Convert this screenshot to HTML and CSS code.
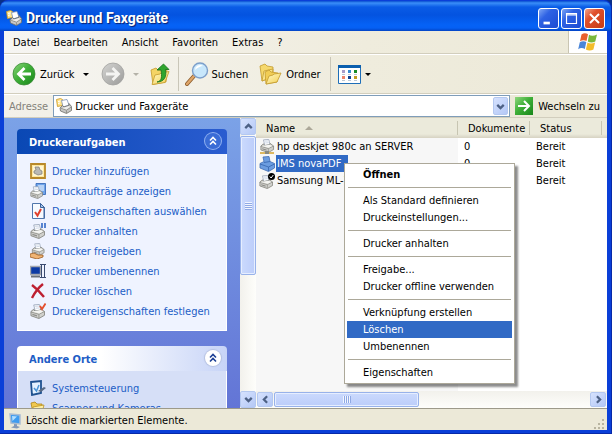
FILE: index.html
```html
<!DOCTYPE html>
<html lang="de">
<head>
  <meta charset="utf-8">
  <title>Drucker und Faxgeräte</title>
  <link rel="stylesheet" href="styles.css">
</head>
<body>
  <svg class="sprites" aria-hidden="true">
    <symbol id="printer" viewBox="0 0 16 16">
      <path d="M4 1l6-.5 1.500 6-6 1z" fill="#fff" stroke="#8c9ab0" stroke-width=".8"/>
      <path d="M5.500 2.500l4-.3M6 4.500l4-.3" stroke="#b8c6dc" stroke-width=".8"/>
      <path d="M1 8l3-2.500 1 2 6-1 .5-1.500 4 3v4l-6 3.500-8.500-3z" fill="#d0d0cc" stroke="#77776f" stroke-width=".8"/>
      <path d="M1 8.500l8.500 2.500 6-3M9.500 11v4" fill="none" stroke="#8b8b84" stroke-width=".8"/>
      <path d="M2.500 10.500l5 1.600v1.200l-5-1.500z" fill="#8c8c88"/>
      <path d="M2 8l8 2 4-2-3-1.500-6 1z" fill="#f5f5f2"/>
    </symbol>
    <symbol id="printers" viewBox="0 0 16 16">
      <path d="M.500 1.500l4-1 2 1v6l-5 1z" fill="#ffe48a" stroke="#c99722" stroke-width=".8"/>
      <path d="M2 3.500l2.500-.5M2 5.500l2-.5" stroke="#fff"/>
      <path d="M5.500 2.500l5.500-1 2 5.500-6 2z" fill="#fff" stroke="#7c90b4" stroke-width=".8"/>
      <path d="M4 10l2.500-2.500L8 9l5-1.500V5.500l2.500 3v4l-5 3L4.500 13z" fill="#c6c6c4" stroke="#6e6e68" stroke-width=".8"/>
      <path d="M4.500 10l6 2.200 4.500-3M10.500 12.500v2.500" fill="none" stroke="#888880" stroke-width=".8"/>
      <path d="M6 10l4.500 1.500L14 9l-1-1-5 1.500z" fill="#efefed"/>
    </symbol>
    <symbol id="chevrons" viewBox="0 0 16 16">
      <path d="M5 7.500l3-3 3 3M5 11.500l3-3 3 3" fill="none" stroke="currentColor" stroke-width="1.600"/>
    </symbol>
    <symbol id="angle" viewBox="0 0 16 16">
      <path d="M4 6l4 4 4-4" fill="none" stroke="#4d6185" stroke-width="2.800"/>
    </symbol>
    <symbol id="folder" viewBox="0 0 16 16">
      <path d="M1 3l4-1 2 2h5v9H3z" fill="#f0c850" stroke="#ad8416" stroke-width=".8"/>
      <path d="M3 7l11-2-2 8-9 1z" fill="#fff0a4" stroke="#ba9224" stroke-width=".8"/>
    </symbol>
    <linearGradient id="greenFill" x1="0" y1="0" x2="1" y2="1">
      <stop offset="0" stop-color="#8ed67d"/>
      <stop offset=".45" stop-color="#3fb038"/>
      <stop offset="1" stop-color="#17861a"/>
    </linearGradient>
    <linearGradient id="grayFill" x1="0" y1="0" x2="1" y2="1">
      <stop offset="0" stop-color="#d4d4d2"/>
      <stop offset="1" stop-color="#9b9b99"/>
    </linearGradient>
    <linearGradient id="folderFill" x1="0" y1="0" x2="1" y2="1">
      <stop offset="0" stop-color="#fff8c4"/>
      <stop offset="1" stop-color="#f3cf52"/>
    </linearGradient>
  </svg>

  <div class="window">
    <header class="titlebar">
      <svg class="icon"><use href="#printers"/></svg>
      <h1>Drucker und Faxgeräte</h1>
      <div class="controls">
        <button aria-label="Minimieren"><svg viewBox="0 0 21 21"><path d="M5 14h7v3H5z" fill="#fff"/></svg></button>
        <button aria-label="Maximieren"><svg viewBox="0 0 21 21"><path d="M5 5h11v11H5zM5 6.500h11" fill="none" stroke="#fff" stroke-width="1.300"/></svg></button>
        <button class="close" aria-label="Schließen"><svg viewBox="0 0 21 21"><path d="M5.500 5.500l10 10M15.500 5.500l-10 10" stroke="#fff" stroke-width="2.200"/></svg></button>
      </div>
    </header>

    <nav class="menubar">
      <button>Datei</button>
      <button>Bearbeiten</button>
      <button>Ansicht</button>
      <button>Favoriten</button>
      <button>Extras</button>
      <button>?</button>
      <div class="flag">
        <svg viewBox="0 0 20 18">
          <path d="M3.500 1.500C5.500 0 8 0 10 1.200L8.500 8C6.500 7 4 7 2 8.300z" fill="#e8602c"/>
          <path d="M11 1.800c2 1.200 5 1.200 8-.3L17.300 8.500c-2.600 1.200-5.300 1.200-7.500 0z" fill="#7ab83a"/>
          <path d="M1.800 9.300C4 8 6.300 8 8.300 9L6.800 16c-2-1.200-4.600-1.200-6.600.2z" fill="#4a86d8"/>
          <path d="M9.500 9.600c2.200 1.200 5 1.200 7.600-.2l-1.700 7c-2.500 1.300-5.200 1.300-7.500 0z" fill="#f3bd2c"/>
        </svg>
      </div>
    </nav>

    <div class="toolbar">
      <button class="back">
        <svg class="round" viewBox="0 0 24 24">
          <circle cx="12" cy="12" r="11" fill="url(#greenFill)" stroke="#3a8c36" stroke-width=".8"/>
          <path d="M19 12H7M12.500 6l-6 6 6 6" fill="none" stroke="#fff" stroke-width="2.800"/>
        </svg>
        Zurück
        <i class="arrow"></i>
      </button>
      <button class="forward" aria-label="Vorwärts">
        <svg class="round" viewBox="0 0 24 24">
          <circle cx="12" cy="12" r="11" fill="url(#grayFill)" stroke="#a2a2a0" stroke-width=".8"/>
          <path d="M5 12h12M11.500 6l6 6-6 6" fill="none" stroke="#f4f4f2" stroke-width="2.800"/>
        </svg>
        <i class="arrow pale"></i>
      </button>
      <button class="up" aria-label="Aufwärts">
        <svg class="round" viewBox="0 0 24 24">
          <path d="M2 8l5-2 2 2 9-1-1 13-13 2.500z" fill="#f4d465" stroke="#c49b2c" stroke-width=".8"/>
          <path d="M3 22.500L6 13l5-1 1-1 8-1.500-4 11z" fill="url(#folderFill)" stroke="#c49b2c" stroke-width=".8"/>
          <path d="M8 20c5-1 5-5 4-12H8l6.500-6L20 7.500h-3.500C18 15 15 20 8 20z" fill="#2fa52d" stroke="#13701a" stroke-width=".8"/>
        </svg>
      </button>
      <button class="search">
        <svg class="round" viewBox="0 0 24 24">
          <path d="M9 14l-7 8" stroke="#8a5a2a" stroke-width="4" stroke-linecap="round"/>
          <path d="M9 14l-7 8" stroke="#dfa568" stroke-width="2.500" stroke-linecap="round"/>
          <circle cx="15" cy="8.500" r="7.500" fill="#c8e7fb" stroke="#7d9fca" stroke-width="1.400"/>
          <path d="M10 8a5 5 0 0 1 8-4c-2 0-6 2-8 4z" fill="#fff"/>
        </svg>
        Suchen
      </button>
      <button class="folders">
        <svg class="round" viewBox="0 0 24 24">
          <path d="M2 4l5-2 2 2 6 1v10L4 19z" fill="#f5d86c" stroke="#c39a2d" stroke-width=".8"/>
          <path d="M4 19l2-10 9-2-1 8z" fill="url(#folderFill)" stroke="#c39a2d" stroke-width=".8"/>
          <path d="M7 10l4-2 2 2 7 1-1 9-11 2z" fill="#f1cd55" stroke="#c39a2d" stroke-width=".8"/>
          <path d="M8 22l3-8 4-1 1-1 7-1-4 9z" fill="url(#folderFill)" stroke="#c39a2d" stroke-width=".8"/>
        </svg>
        Ordner
      </button>
      <button class="views" aria-label="Ansichten">
        <svg viewBox="0 0 23 19">
          <path d="M.5.500h22v18H.5z" fill="#fff" stroke="#1f6fb8"/>
          <path d="M0 0h23v3H0z" fill="#0c5fae"/>
          <path d="M4 5h3v3H4z" fill="#a99cc8"/>
          <path d="M10 5h3v3h-3z" fill="#3a8ad0"/>
          <path d="M16 5h3v3h-3z" fill="#188c28"/>
          <path d="M4 11h3v3H4z" fill="#ee8468"/>
          <path d="M10 11h3v3h-3z" fill="#12408e"/>
          <path d="M16 11h3v3h-3z" fill="#c09a20"/>
          <path d="M4 9.500h3m3 0h3m3 0h3M4 15.500h3m3 0h3m3 0h3" stroke="#bcc8d4"/>
        </svg>
        <i class="arrow"></i>
      </button>
    </div>

    <form class="address">
      <label for="path">Adresse</label>
      <div class="combo">
        <svg class="icon"><use href="#printers"/></svg>
        <input id="path" type="text" value="Drucker und Faxgeräte">
        <button type="button" class="scroll-btn" aria-label="Verlauf"><svg><use href="#angle"/></svg></button>
      </div>
      <button type="button" class="go">
        <svg viewBox="0 0 18 18">
          <path d="M0 0h18v18H0z" fill="url(#greenFill)"/>
          <path d="M3 9h10M9 4l5 5-5 5" fill="none" stroke="#fff" stroke-width="2"/>
        </svg>
        Wechseln zu
      </button>
    </form>

    <main class="content">
      <aside class="sidebar">
        <section class="panel primary">
          <h2>Druckeraufgaben
            <button aria-label="Einklappen"><svg><use href="#chevrons"/></svg></button>
          </h2>
          <ul>
            <li><a href="#"><svg viewBox="0 0 16 16"><path d="M1 1h14v14H1z" fill="#ffe9a0" stroke="#b8892a" stroke-width="1.800"/><path d="M3 3h10v10H3z" fill="#fff6d4"/><path d="M5 4h4l1 3 2 1v3l-4 1-4-2V8l2-1z" fill="#b9b9b5" stroke="#7b7b76" stroke-width=".7"/></svg>Drucker hinzufügen</a></li>
            <li><a href="#"><svg viewBox="0 0 16 16"><path d="M6 .5h9.500v11H6z" fill="#6fa4ea" stroke="#2d62b4" stroke-width=".8"/><path d="M8 3h6M8 5h6M8 7h6" stroke="#fff"/><use href="#printer" y="3" width="13" height="13"/></svg>Druckaufträge anzeigen</a></li>
            <li><a href="#"><svg viewBox="0 0 16 16"><path d="M2.500.500h8l4 4v11h-12z" fill="#f6faff" stroke="#5076ac"/><path d="M10.500.500v4h4zM14 5v10" fill="#aac4ea" stroke="#3a639c"/><path d="M5 9l2.500 3.500L11 6" fill="none" stroke="#e0402c" stroke-width="2"/></svg>Druckeigenschaften auswählen</a></li>
            <li><a href="#"><svg viewBox="0 0 16 16"><use href="#printer" y="1" width="15" height="15"/><path d="M12 0v5M15 0v5" stroke="#4678cc" stroke-width="1.800"/></svg>Drucker anhalten</a></li>
            <li><a href="#"><svg viewBox="0 0 16 16"><use href="#printer" x="1" width="14" height="13"/><path d="M0 11l4-1 4 2h5v2l-6 2-7-2z" fill="#f0b474" stroke="#9b5c22" stroke-width=".8"/></svg>Drucker freigeben</a></li>
            <li><a href="#"><svg viewBox="0 0 16 16"><path d="M.5 3.500h10v8H.5z" fill="#0c3aa4" stroke="#a5a8ae" stroke-width="1.400"/><path d="M1 13.500h9" stroke="#6b7078" stroke-width="2"/><path d="M11.500 2v12M14.500 2v12M10 1.500h6M10 14.500h6" stroke="#3a4a70"/></svg>Drucker umbenennen</a></li>
            <li><a href="#"><svg viewBox="0 0 16 16"><path d="M2 2c4 3 8 7 12 12M13 1C8 5 5 9 2 15" fill="none" stroke="#bd1f31" stroke-width="2.400"/></svg>Drucker löschen</a></li>
            <li><a href="#"><svg viewBox="0 0 16 16"><use href="#printer" y="1" width="15" height="15"/><path d="M10 3l2 3 3.500-5.500" fill="none" stroke="#e4502e" stroke-width="1.800"/></svg>Druckereigenschaften festlegen</a></li>
          </ul>
        </section>
        <section class="panel">
          <h2>Andere Orte
            <button aria-label="Einklappen"><svg><use href="#chevrons"/></svg></button>
          </h2>
          <ul>
            <li><a href="#"><svg viewBox="0 0 16 16"><path d="M1 2l10-1v12L2 15z" fill="#e4f2ff" stroke="#1f5290" stroke-width="1.800"/><path d="M4 8l2.500 3L9 5" fill="none" stroke="#4a94d6" stroke-width="1.500"/><path d="M8 11l6-4 2 1-5 4z" fill="#586a84"/></svg>Systemsteuerung</a></li>
            <li><a href="#"><svg viewBox="0 0 16 16"><use href="#folder"/></svg>Scanner und Kameras</a></li>
          </ul>
        </section>
      </aside>

      <div class="vscroll">
        <button class="scroll-btn up-btn" aria-label="Nach oben"><svg><use href="#angle"/></svg></button>
        <div class="thumb"></div>
        <button class="scroll-btn down-btn" aria-label="Nach unten"><svg><use href="#angle"/></svg></button>
      </div>

      <div class="list">
        <table>
          <colgroup><col class="col-name"><col class="col-docs"><col class="col-status"><col></colgroup>
          <thead>
            <tr><th>Name <i class="sort"></i></th><th>Dokumente</th><th>Status</th><th></th></tr>
          </thead>
          <tbody>
            <tr>
              <td><svg class="icon" viewBox="0 0 16 16"><use href="#printer" width="16" height="14"/><path d="M1 14h14" stroke="#d8a93a" stroke-width="1.600"/><path d="M6 12h4v3H6z" fill="#8a8a80"/></svg><span>hp deskjet 980c an SERVER</span></td>
              <td>0</td><td>Bereit</td><td></td>
            </tr>
            <tr class="selected">
              <td><svg class="icon" viewBox="0 0 16 16"><path d="M4 1l6-.5 1 5 4.500 2v4.500l-6 3.500L1 12V7.500l4-2z" fill="#6c9de0" stroke="#3f6cb2" stroke-width=".8"/><path d="M1 8l8.500 3 6-3M9.500 11v4M5 6.500l6-1" fill="none" stroke="#3564ae" stroke-width=".8"/></svg><span>IMS novaPDF</span></td>
              <td>0</td><td>Bereit</td><td></td>
            </tr>
            <tr>
              <td><svg class="icon" viewBox="0 0 16 16"><use href="#printer" y="2" width="14" height="14"/><circle cx="12.500" cy="3.500" r="3.500"/><path d="M10.800 3.500l1.300 1.500 2.200-3" fill="none" stroke="#fff"/></svg><span>Samsung ML-7000</span></td>
              <td>0</td><td>Bereit</td><td></td>
            </tr>
          </tbody>
        </table>
        <div class="rows-rest"></div>
        <div class="hscroll">
          <button class="scroll-btn left-btn" aria-label="Nach links"><svg><use href="#angle"/></svg></button>
          <div class="thumb"></div>
          <button class="scroll-btn right-btn" aria-label="Nach rechts"><svg><use href="#angle"/></svg></button>
        </div>
      </div>
    </main>

    <footer class="statusbar">
      <svg class="icon" viewBox="0 0 16 16">
        <path d="M3 1l10 1v9L4 10z" fill="#3f9cf0" stroke="#a9bcd2" stroke-width="1.500"/>
        <path d="M5 3l5 .5L5.500 8z" fill="#b4e0ff"/>
        <path d="M7 11l3 .3V13l3 1-3 1.500-6-1 3-1.500z" fill="#8399b8"/>
      </svg>
      <span>Löscht die markierten Elemente.</span>
      <svg class="grip" viewBox="0 0 12 12"><path d="M9 1h2v2H9zM5 5h2v2H5zM9 5h2v2H9zM1 9h2v2H1zM5 9h2v2H5zM9 9h2v2H9z" fill="#b8b4a0"/></svg>
    </footer>
  </div>

  <div class="context-menu" role="menu">
    <button class="default" role="menuitem">Öffnen</button>
    <hr>
    <button role="menuitem">Als Standard definieren</button>
    <button role="menuitem">Druckeinstellungen...</button>
    <hr>
    <button role="menuitem">Drucker anhalten</button>
    <hr>
    <button role="menuitem">Freigabe...</button>
    <button role="menuitem">Drucker offline verwenden</button>
    <hr>
    <button role="menuitem">Verknüpfung erstellen</button>
    <button class="active" role="menuitem">Löschen</button>
    <button role="menuitem">Umbenennen</button>
    <hr>
    <button role="menuitem">Eigenschaften</button>
  </div>
</body>
</html>
```

FILE: styles.css
```css
* {
  box-sizing: border-box;
  margin: 0;
  padding: 0;
}

body {
  font-family: Tahoma, "DejaVu Sans Condensed", "DejaVu Sans", sans-serif;
  font-size: 11px;
  line-height: 17px;
  color: #000;
  background: #0a2f86;
  height: 100vh;
  overflow: hidden;
}

button,
input {
  font: inherit;
  color: inherit;
  background: none;
  border: none;
}

button {
  display: flex;
  align-items: center;
  white-space: nowrap;
}

svg {
  display: block;
  flex: none;
}

.sprites {
  position: absolute;
  width: 0;
  height: 0;
}

.icon {
  width: 16px;
  height: 16px;
}

.window {
  height: 100vh;
  display: flex;
  flex-direction: column;
  padding: 1px 4px 3px;
  background: #0a3fd8;
  border: solid #0729a8;
  border-width: 0 1px 1px 0;
  border-radius: 8px 8px 0 0;
}

/* title bar */

.titlebar {
  display: flex;
  align-items: center;
  gap: 4px;
  height: 30px;
  margin: 0 -4px;
  padding: 4px 6px 0 6px;
  border-radius: 8px 8px 0 0;
  background: linear-gradient(#0a4fd0 0, #3a8ef8 2px, #0a5ce6 6px, #0453e0 14px, #0562f6 24px, #0560f4 27px, #0344c4 30px);
  color: #fff;
}

h1 {
  flex: 1;
  font-family: "Trebuchet MS", Roboto, sans-serif;
  font-size: 14px;
  font-weight: bold;
  text-shadow: 1px 1px 1px #0a1f6e;
}

.controls {
  display: flex;
  gap: 2px;
}

.controls button {
  width: 21px;
  height: 21px;
  border: 1px solid #fff;
  border-radius: 3px;
  background: linear-gradient(135deg, #7ea6f4, #2e62e4 35%, #1c4cd2);
}

.controls svg {
  width: 19px;
  height: 19px;
}

.controls .close {
  background: linear-gradient(135deg, #f0a48c, #e0502c 35%, #c43c16);
}

/* menu, toolbar, address */

.menubar {
  display: flex;
  height: 23px;
  padding-left: 2px;
  background: linear-gradient(90deg, #f6f5f2, #efecdd 60%, #ece9d8);
  border-bottom: 1px solid #d2cebd;
}

.menubar button {
  padding: 0 7px;
}

.flag {
  display: flex;
  align-items: center;
  justify-content: center;
  width: 39px;
  margin-left: auto;
  background: #fff;
  border-left: 1px solid #c9c5b2;
}

.flag svg {
  width: 20px;
  height: 18px;
}

.toolbar {
  display: flex;
  align-items: center;
  height: 40px;
  padding-left: 8px;
  background: linear-gradient(90deg, #f6f5f2, #efecdd 60%, #ece9d8);
  border-top: 1px solid #fff;
  border-bottom: 1px solid #d2cebd;
}

.round {
  width: 24px;
  height: 24px;
}

.arrow {
  border: 3px solid transparent;
  border-top-color: #000;
  border-bottom: 0;
}

.arrow.pale {
  border-top-color: #b4b2a8;
}

.back {
  gap: 4px;
}

.back .arrow {
  margin-left: 4px;
}

.forward {
  gap: 8px;
  margin-left: 12px;
}

.up {
  margin-left: 10px;
}

.search {
  gap: 3px;
  height: 34px;
  margin-left: 5px;
  padding-left: 6px;
  border-left: 1px solid #c9c6b8;
}

.folders {
  gap: 4px;
  margin-left: 10px;
}

.views {
  gap: 4px;
  height: 34px;
  margin-left: 9px;
  padding-left: 7px;
  border-left: 1px solid #c9c6b8;
}

.views svg {
  width: 23px;
  height: 19px;
}

.address {
  display: flex;
  align-items: center;
  gap: 5px;
  height: 24px;
  padding: 0 7px 0 5px;
  background: linear-gradient(90deg, #f3f1ea, #ece9d8 60%);
  border-top: 1px solid #fff;
  border-bottom: 1px solid #d2cebd;
}

.address label {
  color: #84827a;
}

.combo {
  flex: 1;
  display: flex;
  align-items: center;
  gap: 3px;
  height: 22px;
  padding: 0 1px 0 2px;
  background: #fff;
  border: 1px solid #7f9db9;
}

.combo input {
  flex: 1;
  min-width: 0;
  height: 17px;
  outline: none;
}

.go {
  gap: 5px;
}

.go svg {
  width: 18px;
  height: 18px;
}

/* scroll bars */

.scroll-btn {
  flex: none;
  justify-content: center;
  width: 15px;
  height: 18px;
  border: 1px solid #b4c8f0;
  border-radius: 2px;
  background: linear-gradient(135deg, #d6e2fe, #b4c8f6);
}

.scroll-btn svg {
  width: 13px;
  height: 13px;
}

.up-btn svg {
  transform: rotate(180deg);
}

.left-btn svg {
  transform: rotate(90deg);
}

.right-btn svg {
  transform: rotate(-90deg);
}

.thumb {
  display: flex;
  align-items: center;
  justify-content: center;
  border: 1px solid #98b2ea;
  border-radius: 2px;
  box-shadow: inset 0 0 0 1px #e6eeff;
}

.thumb::after {
  content: '';
}

.vscroll {
  flex: none;
  display: flex;
  flex-direction: column;
  gap: 1px;
  width: 16px;
  background: linear-gradient(90deg, #f2f1ec, #fefefb);
}

.vscroll .scroll-btn {
  width: 16px;
  height: 17px;
}

.vscroll .thumb {
  flex: 0 1 139px;
  background: linear-gradient(90deg, #cbdafd, #bccdfa);
}

.vscroll .thumb::after {
  width: 7px;
  height: 8px;
  background: repeating-linear-gradient(#f2f6ff 0 1px, #8fa9e4 1px 2px);
}

.vscroll .down-btn {
  margin-top: auto;
}

.hscroll {
  display: flex;
  gap: 1px;
  height: 17px;
  padding: 1px;
  background: linear-gradient(#f2f1ec, #fefefb);
}

.hscroll .scroll-btn {
  width: 16px;
  height: 15px;
}

.hscroll .thumb {
  flex: 0 1 145px;
  background: linear-gradient(#cbdafd, #bccdfa);
}

.hscroll .thumb::after {
  width: 8px;
  height: 7px;
  background: repeating-linear-gradient(90deg, #f2f6ff 0 1px, #8fa9e4 1px 2px);
}

.hscroll .right-btn {
  margin-left: auto;
}

/* task pane */

.content {
  flex: 1;
  min-height: 0;
  display: flex;
}

.sidebar {
  flex: 0 0 236px;
  display: flex;
  flex-direction: column;
  gap: 15px;
  padding: 11px 13px 0;
  overflow: hidden;
  background: linear-gradient(#7ba2e7, #6375d6);
}

.panel h2 {
  display: flex;
  align-items: center;
  justify-content: space-between;
  height: 25px;
  padding: 2px 6px 0 12px;
  border-radius: 4px 4px 0 0;
  background: linear-gradient(90deg, #fff 40%, #c7d4f7);
  font-size: 11px;
  color: #215dc6;
}

.panel h2 button {
  justify-content: center;
  width: 16px;
  height: 16px;
  margin-bottom: 4px;
  border-radius: 50%;
  background: #fff;
  box-shadow: 0 0 1px 1px #b4c0e0;
  color: #1c3f94;
}

.panel h2 svg {
  width: 16px;
  height: 16px;
}

.primary h2 {
  background: linear-gradient(90deg, #0a48b4, #2a5cd0);
  color: #fff;
}

.primary h2 button {
  background: #3a6cd6;
  box-shadow: 0 0 0 1px #8fb0f0;
  color: #fff;
}

.panel ul {
  list-style: none;
  padding: 7px 12px 9px;
  background: #d6dff7;
  border: 1px solid #fff;
  border-top: 0;
}

.primary ul {
  background: #eff3ff;
}

.panel a {
  display: flex;
  align-items: center;
  gap: 6px;
  height: 20px;
  color: #215dc6;
  text-decoration: none;
  white-space: nowrap;
}

.panel a svg {
  width: 16px;
  height: 16px;
}

/* printer list */

.list {
  flex: 1;
  min-width: 0;
  display: flex;
  flex-direction: column;
  background: linear-gradient(90deg, #f7f7f7 202px, #fff 202px);
}

table {
  width: 100%;
  table-layout: fixed;
  border-collapse: collapse;
}

.col-name {
  width: 202px;
}

.col-docs,
.col-status {
  width: 72px;
}

th {
  height: 20px;
  padding-left: 10px;
  text-align: left;
  font-weight: normal;
  background: linear-gradient(#ebeadb 16px, #d6d2c2);
  white-space: nowrap;
}

th:not(:last-child) {
  background: linear-gradient(#c7c5b2, #c7c5b2) right center / 1px 14px no-repeat, linear-gradient(#ebeadb 16px, #d6d2c2);
}

.sort {
  display: inline-block;
  margin: 0 0 2px 7px;
  border: 4px solid transparent;
  border-bottom-color: #aca899;
  border-top: 0;
}

td {
  height: 17px;
  padding-left: 6px;
  white-space: nowrap;
}

td:first-child {
  display: flex;
  align-items: center;
  gap: 1px;
  padding-left: 3px;
}

td span {
  padding: 0 2px 0 1px;
}

.selected span {
  padding-right: 7px;
  background: #316ac5;
  color: #fff;
}

.rows-rest {
  flex: 1;
}

/* status bar */

.statusbar {
  display: flex;
  align-items: center;
  gap: 3px;
  height: 22px;
  padding: 2px 2px 0 3px;
  background: #ece9d8;
  border-top: 1px solid #9d9a8a;
}

.grip {
  align-self: flex-end;
  width: 12px;
  height: 12px;
  margin-left: auto;
}

/* context menu */

.context-menu {
  position: absolute;
  left: 344px;
  top: 163px;
  width: 171px;
  padding: 2px;
  background: #fff;
  border: 1px solid #aca899;
  box-shadow: 3px 3px 2px rgba(0, 0, 0, 0.45);
}

.context-menu button {
  width: 100%;
  height: 17px;
  padding-left: 16px;
}

.context-menu .default {
  font-weight: bold;
}

.context-menu .active {
  background: #316ac5;
  color: #fff;
}

.context-menu hr {
  height: 1px;
  margin: 4px 1px;
  border: 0;
  background: #aca899;
}
```
